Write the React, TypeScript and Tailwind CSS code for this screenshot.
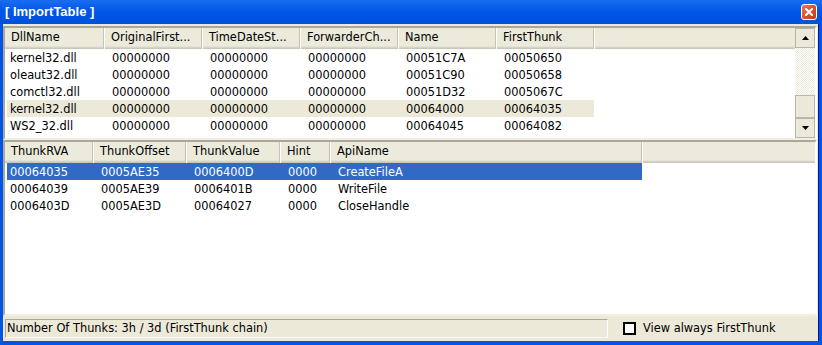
import React from "react";

const upperCols = [99, 98, 98, 98, 98, 98];
const upperHeaders = ["DllName", "OriginalFirst...", "TimeDateSt...", "ForwarderCh...", "Name", "FirstThunk"];
const upperRows = [
  ["kernel32.dll", "00000000", "00000000", "00000000", "00051C7A", "00050650"],
  ["oleaut32.dll", "00000000", "00000000", "00000000", "00051C90", "00050658"],
  ["comctl32.dll", "00000000", "00000000", "00000000", "00051D32", "0005067C"],
  ["kernel32.dll", "00000000", "00000000", "00000000", "00064000", "00064035"],
  ["WS2_32.dll", "00000000", "00000000", "00000000", "00064045", "00064082"],
];

const lowerCols = [88, 93, 94, 50, 312];
const lowerHeaders = ["ThunkRVA", "ThunkOffset", "ThunkValue", "Hint", "ApiName"];
const lowerRows = [
  ["00064035", "0005AE35", "0006400D", "0000", "CreateFileA"],
  ["00064039", "0005AE39", "0006401B", "0000", "WriteFile"],
  ["0006403D", "0005AE3D", "00064027", "0000", "CloseHandle"],
];

function HeaderRow({ cols, headers }: { cols: number[]; headers: string[] }) {
  return (
    <div className="flex h-[21px] shrink-0 bg-[#ebeadb] shadow-[inset_0_-1px_0_#cbc7b8,inset_0_-2px_0_#d6d3c6,inset_0_-3px_0_#e2e2da]">
      {headers.map((h, i) => (
        <div
          key={i}
          style={{ width: cols[i] }}
          className={
            "shrink-0 flex items-center pb-[2px] pl-[6px] whitespace-nowrap overflow-hidden border-r border-[#c7c5b2] " +
            (i > 0 ? "border-l border-l-white" : "")
          }
        >
          {h}
        </div>
      ))}
      <div className="flex-1 border-l border-l-white" />
    </div>
  );
}

function DataRow({
  cols,
  cells,
  variant,
}: {
  cols: number[];
  cells: string[];
  variant: "none" | "grey" | "blue";
}) {
  const bg = variant === "grey" ? "bg-[#ece9d8]" : variant === "blue" ? "bg-[#316ac5] text-white" : "";
  return (
    <div className="flex h-[17px] shrink-0 pl-[2px]">
      <div className={"flex items-center " + bg}>
        {cells.map((c, i) => (
          <div
            key={i}
            style={{ width: i === 0 ? cols[0] - 2 : cols[i] }}
            className={"shrink-0 whitespace-nowrap leading-[17px] pt-[1px] " + (i === 0 ? "pl-[3px]" : "pl-[8px]")}
          >
            {c}
          </div>
        ))}
      </div>
    </div>
  );
}

function ArrowUp() {
  return (
    <svg width="7" height="4" viewBox="0 0 7 4">
      <path d="M3.5 0 L7 4 L0 4 Z" fill="#000" />
    </svg>
  );
}
function ArrowDown() {
  return (
    <svg width="7" height="4" viewBox="0 0 7 4">
      <path d="M0 0 L7 0 L3.5 4 Z" fill="#000" />
    </svg>
  );
}

export default function App() {
  return (
    <div className="w-[822px] h-[345px] flex flex-col bg-[#0055e5] font-['DejaVu_Sans',sans-serif] text-[11.4px] text-black overflow-hidden">
      {/* Title bar */}
      <div className="h-[24px] shrink-0 flex items-center bg-gradient-to-b from-[#1a6cf2] via-[#0055e5] to-[#0050dc] pl-[5px] pr-[5px]">
        <div className="flex-1 text-white font-bold font-['Liberation_Sans',sans-serif] text-[13px] pb-[1px]">[ ImportTable ]</div>
        <div className="w-[16px] h-[16px] rounded-[3px] border border-white bg-gradient-to-br from-[#ea7a58] via-[#d9532f] to-[#bf3a18] flex items-center justify-center">
          <svg width="8" height="8" viewBox="0 0 8 8">
            <path d="M1 1 L7 7 M7 1 L1 7" stroke="#fff" strokeWidth="2" strokeLinecap="square" />
          </svg>
        </div>
      </div>

      {/* Body */}
      <div className="flex-1 flex flex-col ml-[3px] mr-[4px] mb-[4px] bg-[#ece9d8] pt-[2px] shadow-[1px_0_0_#00179e]">
        {/* Upper list */}
        <div className="h-[114px] shrink-0 mr-[1px] flex border-t-2 border-l-2 border-t-[#aca899] border-l-[#aca899] border-b-2 border-r-2 border-b-[#f1efe2] border-r-white bg-white">
          <div className="flex-1 flex flex-col overflow-hidden">
            <HeaderRow cols={upperCols} headers={upperHeaders} />
            {upperRows.map((r, i) => (
              <DataRow key={i} cols={upperCols} cells={r} variant={i === 3 ? "grey" : "none"} />
            ))}
          </div>
          <div className="w-[20px] shrink-0 flex flex-col">
            <div className="h-[20px] shrink-0 bg-[#ece9d8] border border-[#b9b6a8] flex items-center justify-center">
              <ArrowUp />
            </div>
            <div className="flex-1 bg-[repeating-conic-gradient(#ece9d8_0%_25%,#ffffff_0%_50%)] bg-[length:2px_2px]" />
            <div className="h-[23px] shrink-0 bg-[#ece9d8] border border-[#b9b6a8]" />
            <div className="h-[20px] shrink-0 bg-[#ece9d8] border border-[#b9b6a8] flex items-center justify-center">
              <ArrowDown />
            </div>
          </div>
        </div>

        {/* Lower list */}
        <div className="flex-1 mr-[1px] flex flex-col border-t-2 border-l-2 border-t-[#aca899] border-l-[#aca899] border-b-2 border-r-2 border-b-[#f1efe2] border-r-white bg-white overflow-hidden">
          <HeaderRow cols={lowerCols} headers={lowerHeaders} />
          {lowerRows.map((r, i) => (
            <DataRow key={i} cols={lowerCols} cells={r} variant={i === 0 ? "blue" : "none"} />
          ))}
        </div>

        {/* Status */}
        <div className="h-[25px] shrink-0 flex items-center">
          <div className="ml-[2px] w-[603px] h-[19px] border border-t-[#aca899] border-l-[#aca899] border-b-white border-r-white flex items-center pl-[1px] pt-[1px] whitespace-nowrap">
            Number Of Thunks: 3h / 3d (FirstThunk chain)
          </div>
          <div className="ml-[15px] w-[13px] h-[13px] border-2 border-black bg-white shrink-0" />
          <div className="ml-[7px] whitespace-nowrap pt-[1px]">View always FirstThunk</div>
        </div>
      </div>
    </div>
  );
}
